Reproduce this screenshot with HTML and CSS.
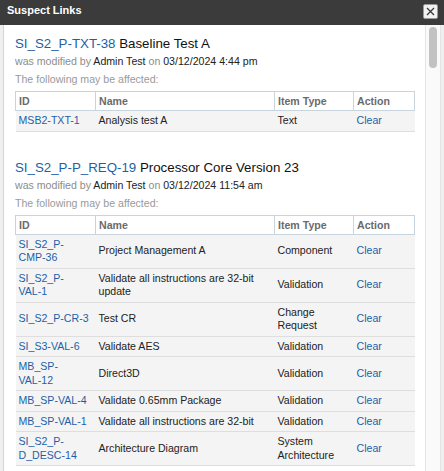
FILE: index.html
```html
<!DOCTYPE html>
<html lang="en">
<head>
    <meta charset="UTF-8">
    <meta name="viewport" content="width=device-width, initial-scale=1.0">
    <title>Suspect Links</title>
    <link rel="stylesheet" href="styles.css">
</head>
<body>
    <div class="dialog">
        <div class="titlebar">
            <span class="title">Suspect Links</span>
            <button class="close" type="button" aria-label="Close">
                <svg width="9" height="9" viewBox="0 0 9 9">
                    <path d="M1 1 L8 8 M8 1 L1 8" stroke="#3a3a3a" stroke-width="1.3" fill="none"/>
                </svg>
            </button>
        </div>
        <div class="frame">
            <div class="content">

                <div class="item">
                    <h3><a href="#">SI_S2_P-TXT-38</a> Baseline Test A</h3>
                    <p class="meta">was modified by <span>Admin Test</span> on <span>03/12/2024 4:44 pm</span></p>
                    <p class="note">The following may be affected:</p>
                    <table class="links">
                        <colgroup>
                            <col class="c-id"><col class="c-name"><col class="c-type"><col class="c-act">
                        </colgroup>
                        <thead>
                            <tr><th>ID</th><th>Name</th><th>Item Type</th><th>Action</th></tr>
                        </thead>
                        <tbody>
                            <tr><td class="id"><a href="#">MSB2-TXT-1</a></td><td>Analysis test A</td><td>Text</td><td><a href="#">Clear</a></td></tr>
                        </tbody>
                    </table>
                </div>

                <div class="item">
                    <h3><a href="#">SI_S2_P-P_REQ-19</a> Processor Core Version 23</h3>
                    <p class="meta">was modified by <span>Admin Test</span> on <span>03/12/2024 11:54 am</span></p>
                    <p class="note">The following may be affected:</p>
                    <table class="links">
                        <colgroup>
                            <col class="c-id"><col class="c-name"><col class="c-type"><col class="c-act">
                        </colgroup>
                        <thead>
                            <tr><th>ID</th><th>Name</th><th>Item Type</th><th>Action</th></tr>
                        </thead>
                        <tbody>
                            <tr><td class="id"><a href="#">SI_S2_P-<span>CMP-36</span></a></td><td>Project Management A</td><td>Component</td><td><a href="#">Clear</a></td></tr>
                            <tr><td class="id"><a href="#">SI_S2_P-<span>VAL-1</span></a></td><td>Validate all instructions are 32-bit update</td><td>Validation</td><td><a href="#">Clear</a></td></tr>
                            <tr><td class="id"><a href="#"><span>SI_S2_P-CR-3</span></a></td><td>Test CR</td><td>Change Request</td><td><a href="#">Clear</a></td></tr>
                            <tr><td class="id"><a href="#"><span>SI_S3-VAL-6</span></a></td><td>Validate AES</td><td>Validation</td><td><a href="#">Clear</a></td></tr>
                            <tr><td class="id"><a href="#">MB_SP-<span>VAL-12</span></a></td><td>Direct3D</td><td>Validation</td><td><a href="#">Clear</a></td></tr>
                            <tr><td class="id"><a href="#"><span>MB_SP-VAL-4</span></a></td><td>Validate 0.65mm Package</td><td>Validation</td><td><a href="#">Clear</a></td></tr>
                            <tr><td class="id"><a href="#"><span>MB_SP-VAL-1</span></a></td><td>Validate all instructions are 32-bit</td><td>Validation</td><td><a href="#">Clear</a></td></tr>
                            <tr><td class="id"><a href="#">SI_S2_P-<span>D_DESC-14</span></a></td><td>Architecture Diagram</td><td>System Architecture</td><td><a href="#">Clear</a></td></tr>
                        </tbody>
                    </table>
                </div>

            </div>
            <div class="scrollbar">
                <div class="thumb"></div>
            </div>
        </div>
    </div>
</body>
</html>
```

FILE: styles.css
```css
body{
    margin:0;
    background:#efefef;
    font-family: "Liberation Sans", Arial, Helvetica, sans-serif;
    font-size:10.6px;
    color:#222;
    height:471px;
    overflow:hidden;
}

a{
    text-decoration:none;
    color:#1d5fa7;
}

.dialog{
    width:444px;
    height:471px;
    display:flex;
    flex-direction:column;
}

.titlebar{
    height:25px;
    box-sizing:border-box;
    background:#3b3b3b;
    display:flex;
    align-items:flex-start;
    justify-content:space-between;
    padding:3px 6px 0 7px;
}

.title{
    color:#fff;
    font-weight:bold;
    font-size:11px;
    line-height:14px;
}

.close{
    width:15px;
    height:15px;
    margin-top:1px;
    padding:0;
    border:1px solid #9a9a9a;
    border-radius:2px;
    background:#f2f2f2;
    display:flex;
    align-items:center;
    justify-content:center;
}

.frame{
    flex:1;
    display:flex;
    padding:0 3px;
    min-height:0;
}

.content{
    flex:1;
    background:#fff;
    border-left:1px solid #d4d4d4;
    padding:11px 11px 0 11px;
    overflow:hidden;
}

.scrollbar{
    width:14px;
    background:#fafafa;
    border-left:1px solid #e4e4e4;
    border-right:1px solid #e4e4e4;
}

.thumb{
    width:8px;
    height:41px;
    margin:2px 0 0 3px;
    background:#c2c2c2;
    border-radius:4px;
}

.item{
    margin-bottom:28px;
}

.item h3{
    margin:0 0 2px;
    font-size:13.3px;
    line-height:16px;
    font-weight:normal;
    color:#111;
}

.meta{
    margin:0;
    line-height:14px;
    color:#8c8c8c;
}

.meta span{
    color:#222;
}

.note{
    margin:4px 0 0;
    line-height:14px;
    color:#9a9a9a;
}

.links{
    margin-top:5px;
    width:399px;
    border-collapse:collapse;
    table-layout:fixed;
}

.c-id{ width:80px; }
.c-name{ width:179px; }
.c-type{ width:79px; }
.c-act{ width:61px; }

.links th{
    text-align:left;
    font-weight:bold;
    color:#6b6b6b;
    background:#fff;
    border:1px solid #c8d5df;
    padding:2px 3px;
    line-height:14px;
}

.links td{
    background:#f4f4f4;
    border-bottom:1px solid #dedede;
    padding:3px;
    line-height:13.5px;
    vertical-align:middle;
}

.links td.id{
    padding-right:5px;
}

.links td.id span{
    white-space:nowrap;
}
```
